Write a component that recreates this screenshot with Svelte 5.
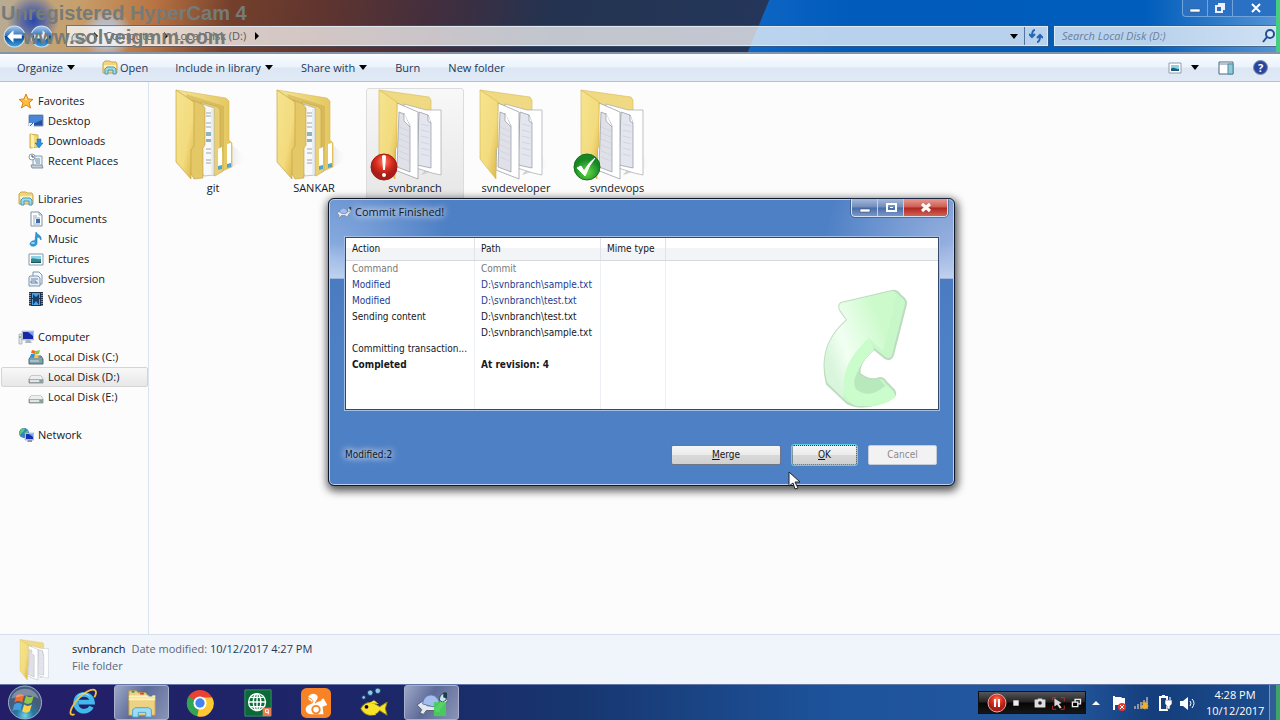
<script lang="ts">
	type Folder = { name: string; kind: 'files' | 'pages'; status?: 'modified' | 'normal' };

	const toolbar = [
		{ label: 'Organize', menu: true },
		{ label: 'Open', menu: false, icon: true },
		{ label: 'Include in library', menu: true },
		{ label: 'Share with', menu: true },
		{ label: 'Burn', menu: false },
		{ label: 'New folder', menu: false }
	];

	const groups = [
		{
			title: 'Favorites',
			icon: 'star',
			items: [
				{ label: 'Desktop', icon: 'desktop' },
				{ label: 'Downloads', icon: 'downloads' },
				{ label: 'Recent Places', icon: 'recent' }
			]
		},
		{
			title: 'Libraries',
			icon: 'library',
			items: [
				{ label: 'Documents', icon: 'document' },
				{ label: 'Music', icon: 'music' },
				{ label: 'Pictures', icon: 'picture' },
				{ label: 'Subversion', icon: 'subversion' },
				{ label: 'Videos', icon: 'video' }
			]
		},
		{
			title: 'Computer',
			icon: 'computer',
			items: [
				{ label: 'Local Disk (C:)', icon: 'system' },
				{ label: 'Local Disk (D:)', icon: 'disk' },
				{ label: 'Local Disk (E:)', icon: 'disk' }
			]
		},
		{ title: 'Network', icon: 'network', items: [] }
	];

	const folders: Folder[] = [
		{ name: 'git', kind: 'files' },
		{ name: 'SANKAR', kind: 'files' },
		{ name: 'svnbranch', kind: 'pages', status: 'modified' },
		{ name: 'svndeveloper', kind: 'pages' },
		{ name: 'svndevops', kind: 'pages', status: 'normal' }
	];

	const log = [
		{ action: 'Command', path: 'Commit', style: 'muted' },
		{ action: 'Modified', path: 'D:\\svnbranch\\sample.txt', style: 'changed' },
		{ action: 'Modified', path: 'D:\\svnbranch\\test.txt', style: 'changed' },
		{ action: 'Sending content', path: 'D:\\svnbranch\\test.txt', style: '' },
		{ action: '', path: 'D:\\svnbranch\\sample.txt', style: '' },
		{ action: 'Committing transaction...', path: '', style: '' },
		{ action: 'Completed', path: 'At revision: 4', style: 'done' }
	];

	const apps = ['ie', 'explorer', 'chrome', 'globe', 'uc', 'fish', 'turtle'];

	let selectedPlace = $state('Local Disk (D:)');
	let selectedFolder = $state('svnbranch');
	let dialogOpen = $state(true);
</script>

{#snippet navIcon(name: string)}
	<svg class="icon" viewBox="0 0 16 16" aria-hidden="true">
		{#if name === 'star'}
			<path d="M8 1l2 5 5 .4-4 3.4 1.6 5.2L8 12l-4.600 3L5 9.800 1 6.400 6 6z" fill="#ffbe3c" stroke="#d98220" />
			<path d="M8 3l1 4-5 0 3 0z" fill="#fff0a8" />
		{:else if name === 'desktop'}
			<path d="M1 2h14v11H1z" fill="#23509f" stroke="#8199b8" />
			<path d="M2 3h12v4L2 12z" fill="#4a86d8" />
			<path d="M1 10h5v4H1z" fill="#e8f3ff" /><path d="M2 13l3-3" stroke="#2467c0" />
		{:else if name === 'downloads'}
			<path d="M2 1l8 1v12l-8 1z" fill="#f2d978" stroke="#cfae4e" />
			<path d="M3 1l3 2v12l-3-1z" fill="#fdf0aa" />
			<path d="M9 6h4v4h2l-4 5-4-5h2z" fill="#2d8fdd" stroke="#1a67b0" stroke-width=".5" />
		{:else if name === 'recent'}
			<path d="M5 3h9v10H5z" fill="#edf3f8" stroke="#8c9dab" />
			<path d="M3 12h11l1 3H4z" fill="#c3ced6" stroke="#8796a3" />
			<path d="M7 6h5M7 8h5M8 10h4" stroke="#5e8fb5" />
			<circle cx="4" cy="4" r="3" fill="#fff" stroke="#8899a8" /><path d="M4 2v2h2" stroke="#446" fill="none" />
		{:else if name === 'library'}
			<path d="M1 3l2-2h5l1 1h5l1 2v9H1z" fill="#f3d67a" stroke="#c9a646" />
			<path d="M2 5h12v3H2z" fill="#fff1b5" />
			<path d="M3 14V9l2-2h7l2 2v5h-3v-4H6v4z" fill="#9adcf2" stroke="#4795bd" />
		{:else if name === 'document'}
			<path d="M3 1h8l3 3v11H3z" fill="#fff" stroke="#7d91a8" />
			<path d="M11 1v3h3M5 5h4M5 7h7M5 9h2M5 11h2M5 13h7" stroke="#93a7bd" fill="none" />
			<path d="M8 8h4v4H8z" fill="#3d6fae" />
		{:else if name === 'music'}
			<path d="M8 1c1 3 6 3 5 8-1-2-2-3-4-3v6c0 4-7 4-7 1 0-2 3-4 5-3z" fill="#2f9bdc" stroke="#1774b5" stroke-width=".6" />
			<ellipse cx="5" cy="12" rx="2" ry="1" fill="#91d8fa" />
		{:else if name === 'picture'}
			<path d="M1 3h14v11H1z" fill="#fff" stroke="#8497a5" />
			<path d="M3 5h10v7H3z" fill="#8cd4ec" />
			<path d="M3 8c3-2 5 1 10 0v4H3z" fill="#2d8a86" /><path d="M3 11h10v1H3z" fill="#1a5268" />
		{:else if name === 'subversion'}
			<path d="M5 1h6l3 3v9H5z" fill="#f6f9fc" stroke="#7f95b0" />
			<path d="M2 5h8l2 2v8H1V6z" fill="#e6eef8" stroke="#7f95b0" />
			<path d="M3 8h7M3 12h7M8 12v-2H3v2" stroke="#6883a6" fill="none" />
		{:else if name === 'video'}
			<path d="M1 1h14v14H1z" fill="#243348" />
			<path d="M4 2h8v5H4zM4 8h8v6H4z" fill="#4ca3df" />
			<path d="M5 3l3 3 3-3v11l-3-4-3 4z" fill="#173e6d" />
			<path d="M2 2v13M14 2v13" stroke="#e5edf4" stroke-dasharray="1 1" />
		{:else if name === 'computer'}
			<path d="M1 5h3v10H1z" fill="#dfe4e8" stroke="#909aa4" stroke-width=".6" /><path d="M1 8h2" stroke="#4a9d46" />
			<path d="M4 2h12v9H4z" fill="#c6ced8" stroke="#909bab" stroke-width=".5" />
			<path d="M5 3h10v7H5z" fill="#1727a8" /><path d="M10 3h5v4z" fill="#7aa0f1" />
			<path d="M8 11h4l2 3H7z" fill="#adb6c0" />
		{:else if name === 'system'}
			<path d="M1 10l2-3h10l2 3v5H1z" fill="#809eac" stroke="#4d6b79" />
			<path d="M2 12h9" stroke="#d0e2ea" /><path d="M12 12h2" stroke="#45d448" />
			<path d="M4 1l4 1-1 3-4-1z" fill="#f26822" /><path d="M8 2l4-1-1 4-4 0z" fill="#8bc63e" />
			<path d="M3 5l4 0-1 4-4-1z" fill="#2496db" /><path d="M7 5l4 1-1 3-4 0z" fill="#fcc536" />
		{:else if name === 'disk'}
			<path d="M1 10l2-3h10l2 3v4H1z" fill="#a9afb3" stroke="#777e83" stroke-width=".7" />
			<path d="M3 7h10l2 3H1z" fill="#eceff0" /><path d="M2 11h9v2H2z" fill="#e1e5e7" /><path d="M12 12h2" stroke="#3bb34a" />
		{:else if name === 'network'}
			<circle cx="6" cy="6" r="5" fill="#2c86c7" />
			<path d="M3 2c4-2 5 1 2 3-2 1-2 4-4 2zM6 6l4-3v5z" fill="#6ac36b" />
			<path d="M7 6h9v7H7z" fill="#c9d4df" stroke="#7d8898" stroke-width=".5" />
			<path d="M8 7h7v5H8z" fill="#1430b5" /><path d="M11 7h4v3z" fill="#7ba4f1" /><path d="M10 13h4v2h-5z" fill="#8d99a8" />
		{/if}
	</svg>
{/snippet}

{#snippet folderArt(kind: string, status?: string)}
	<svg class="folder-art" viewBox="0 0 98 92" aria-hidden="true">
		{#if kind === 'files'}
			<path d="M56 84l28-14-16-14z" fill="url(#shade)" />
			<path d="M12 1l50 8 3 3v39l3 3v24l-11 4-17-6z" fill="url(#fold)" stroke="#d8b955" stroke-width=".6" />
			<path d="M22 5l38 12v40l-3 25-8 2z" fill="#c9a74b" opacity=".5" />
			<path d="M37 13l17 5 2 3v38l3 3v20l-8 5-12-7z" fill="#e9d074" stroke="#c5a548" stroke-width=".6" />
			<path d="M32 13l18 6v67l-10 1-8-14z" fill="#f8f9fb" stroke="#a8adb4" stroke-width=".7" />
			<path d="M48 20v65" stroke="#cbd0d7" stroke-width=".6" />
			<path d="M42 24h5M42 27h5M42 34h5M42 38h5M42 60h5M42 64h5M42 71h5M42 74h5" stroke="#9ca6b0" />
			<path d="M42 43h5v4h-5zM42 50h5v3h-5z" fill="#8bb5c6" />
			<path d="M54 60l4-2v21l-4 2zM63 55l4-1v23l-4 2z" fill="#fff" />
			<path d="M54 77l4-1v4l-4 1zM63 75l4-1v4l-4 1z" fill="#57a2c7" />
			<path d="M28 11l10 4 3 4v37l-2 3v30l-9 1-5-9z" fill="#e4c868" stroke="#c09f44" stroke-width=".6" />
			<path d="M12 1l18 12v44l-3 4v29L12 73z" fill="url(#cover)" stroke="#c5a443" stroke-width=".7" />
		{:else}
			<path d="M55 86l30-9-12-12z" fill="url(#shade)" />
			<path d="M13 1l50 7 2 3v25H24z" fill="#efd982" stroke="#d4b959" stroke-width=".6" />
			<path d="M38 15l22 6h15v65l-9-2-28-9z" fill="#fff" stroke="#a6a8ad" stroke-width=".7" />
			<path d="M53 23l9 3 3 8v45l-14-3z" fill="#e3e5ef" stroke="#91959f" stroke-width=".7" />
			<path d="M62 26v6l3 2" fill="#fff" stroke="#8d929c" stroke-width=".7" />
			<path d="M31 14l21 9v67l-23-9z" fill="#fff" stroke="#9d9fa5" stroke-width=".8" />
			<path d="M33 23l5 2 6 12v46l-13-5z" fill="#e0e1e8" stroke="#92959d" stroke-width=".7" />
			<path d="M38 24l0 8 6 6" fill="#fff" stroke="#969aa4" stroke-width=".7" />
			<path d="M33 38l10 4M33 44l10 4M33 50l10 4M33 56l10 4M33 62l10 4M33 68l10 4M55 35l8 2M55 41l8 2M55 47l8 2M55 53l8 2M55 59l8 2M55 65l8 2" stroke="#d2d5e0" />
			<path d="M13 1l18 12v45l-2 2v30L13 70z" fill="url(#cover)" stroke="#d4b34a" stroke-width=".6" />
		{/if}
		{#if status === 'modified'}
			<circle cx="18" cy="78" r="13" fill="url(#red)" stroke="#9f1c13" />
			<path d="M16 67q2-2 4 0l-1 14h-2z" fill="#fff" /><circle cx="18" cy="86" r="2" fill="#fff" />
		{:else if status === 'normal'}
			<circle cx="19" cy="78" r="13" fill="url(#green)" stroke="#176f18" />
			<path d="M9 79l4-2 3 5q5-9 11-13-6 7-10 18z" fill="#fff" stroke="#fff" />
		{/if}
	</svg>
{/snippet}

{#snippet turtle()}
	<path d="M2 18l6-4 5 5h10l6-8h4l2 2-7 9-2 4-4 1-1-3h-9l-3 4-4-1 2-4z" fill="#e4e8ef" stroke="#555f70" />
	<path d="M8 17c1-12 15-13 18-1l-7 4z" fill="#a4bdf0" stroke="#6376a8" />
	<path d="M26 13c0-5 2-7 7-8v8l-4 2z" fill="#c9e5eb" stroke="#354657" /><path d="M30 5h4v6l-4-1z" fill="#173c54" />
{/snippet}

<svg class="defs" aria-hidden="true">
	<defs>
		<linearGradient id="cover" x2="1" y2="1"><stop stop-color="#f5e48f" /><stop offset=".6" stop-color="#f3db7e" /><stop offset="1" stop-color="#d9b443" /></linearGradient>
		<linearGradient id="fold" x2="1"><stop stop-color="#f5e596" /><stop offset="1" stop-color="#e3c65f" /></linearGradient>
		<linearGradient id="shade"><stop stop-color="#c5c5c5" /><stop offset="1" stop-color="#fff" stop-opacity="0" /></linearGradient>
		<radialGradient id="red" cy=".3"><stop stop-color="#fa7d63" /><stop offset=".6" stop-color="#dc2d20" /><stop offset="1" stop-color="#a81e16" /></radialGradient>
		<radialGradient id="green" cy=".7"><stop stop-color="#62dc46" /><stop offset="1" stop-color="#178726" /></radialGradient>
		<linearGradient id="mint" x1=".1" y1=".7" x2=".8" y2=".3"><stop stop-color="#d9f6dc" /><stop offset=".3" stop-color="#f2fff3" /><stop offset="1" stop-color="#ccfacb" /></linearGradient>
		<radialGradient id="orb" cy=".9"><stop stop-color="#6cd7ec" /><stop offset=".5" stop-color="#277a9f" /><stop offset="1" stop-color="#475c7c" /></radialGradient>
		<linearGradient id="round" y2="1" x2="0"><stop stop-color="#9fc7ef" /><stop offset=".48" stop-color="#3771b5" /><stop offset=".5" stop-color="#0b4291" /><stop offset="1" stop-color="#39a8e8" /></linearGradient>
	</defs>
</svg>

<div class="screen">
	<header class="titlebar">
		<div class="caption">
			<button aria-label="Minimize"><svg viewBox="0 0 14 12"><path d="M2 7h10v3H2z" fill="#fff" stroke="#456" stroke-width=".6" /></svg></button>
			<button aria-label="Restore"><svg viewBox="0 0 14 12"><path d="M5 2h6v6M3 4h6v6H3z" fill="none" stroke="#eef" stroke-width="2" /></svg></button>
			<button class="wide" aria-label="Close"><svg viewBox="0 0 14 12"><path d="M3 2l8 8M11 2l-8 8" stroke="#fff" stroke-width="2" /></svg></button>
		</div>
		<div class="address-row">
			<div class="history">
				<button aria-label="Back"><svg viewBox="0 0 24 24"><circle cx="12" cy="12" r="10" fill="url(#round)" stroke="#cbe0f1" /><path d="M11 6l-6 6 6 6v-4h8v-4h-8z" fill="#fff" /></svg></button>
				<button aria-label="Forward"><svg viewBox="0 0 24 24"><circle cx="12" cy="12" r="10" fill="url(#round)" stroke="#cbe0f1" /><path d="M13 6l6 6-6 6v-4H5v-4h8z" fill="#e4f0fb" /></svg></button>
			</div>
			<nav class="address" aria-label="Address">
				<svg class="drive" viewBox="0 0 16 16"><path d="M1 9l2-3h10l2 3v4H1z" fill="#d6d9db" stroke="#70777c" /></svg>
				<svg class="tri" viewBox="0 0 6 8"><path d="M1 0l4 4-4 4z" /></svg>
				<a href="#computer">Computer</a>
				<svg class="tri" viewBox="0 0 6 8"><path d="M1 0l4 4-4 4z" /></svg>
				<a href="#d">Local Disk (D:)</a>
				<svg class="tri last" viewBox="0 0 6 8"><path d="M1 0l4 4-4 4z" /></svg>
				<button class="drop" aria-label="Previous locations"><svg class="down" viewBox="0 0 8 5"><path d="M0 0h8L4 5z" /></svg></button>
				<button class="refresh" aria-label="Refresh"><svg viewBox="0 0 14 14"><path d="M6 1C3 1 3 4 3 7M0 5l3 3 3-3M8 13c3 0 3-3 3-6M8 9l3-3 3 3" fill="none" stroke="#2467b5" stroke-width="2" /></svg></button>
			</nav>
			<label class="search">
				<input type="text" aria-label="Search" placeholder="Search Local Disk (D:)" />
				<svg viewBox="0 0 14 14"><circle cx="8" cy="5" r="4" fill="#dcecfb" stroke="#234e92" stroke-width="2" /><path d="M5 8l-4 5" stroke="#234e92" stroke-width="2" /></svg>
			</label>
		</div>
	</header>

	<div class="toolbar">
		{#each toolbar as item}
			<button class:open={item.icon}>
				{#if item.icon}{@render navIcon('library')}{/if}
				{item.label}
				{#if item.menu}<svg class="down" viewBox="0 0 8 5"><path d="M0 0h8L4 5z" /></svg>{/if}
			</button>
		{/each}
		<div class="views">
			<button aria-label="Change view">
				<svg class="view-icon" viewBox="0 0 14 12"><path d="M1 1h12v10H1z" fill="#fff" stroke="#8c9eae" /><path d="M3 3h8v6H3z" fill="#8bd3e7" /><path d="M3 7c3-3 5 1 8 0v2H3z" fill="#205b7a" /></svg>
				<svg class="down" viewBox="0 0 8 5"><path d="M0 0h8L4 5z" /></svg>
			</button>
			<button aria-label="Preview pane"><svg class="pane-icon" viewBox="0 0 16 14"><path d="M1 1h14v12H1z" fill="#fff" stroke="#4d697f" /><path d="M1 3h14" stroke="#718a9e" /><path d="M10 3h5v10h-5z" fill="#8ccbd8" stroke="#53889d" /></svg></button>
			<button class="help" aria-label="Help"><span>?</span></button>
		</div>
	</div>

	<main>
		<aside>
			{#each groups as group}
				<section>
					<button class="place head">{@render navIcon(group.icon)}{group.title}</button>
					{#each group.items as item}
						<button class="place" class:selected={selectedPlace === item.label} onclick={() => (selectedPlace = item.label)}>
							{@render navIcon(item.icon)}{item.label}
						</button>
					{/each}
				</section>
			{/each}
		</aside>
		<div class="files">
			{#each folders as folder}
				<button class="folder" class:selected={selectedFolder === folder.name} onclick={() => (selectedFolder = folder.name)}>
					{@render folderArt(folder.kind, folder.status)}
					<span>{folder.name}</span>
				</button>
			{/each}
		</div>
	</main>

	<footer class="details">
		<div class="thumb">{@render folderArt('pages')}</div>
		<div class="info">
			<p><strong>{selectedFolder}</strong> <span>Date modified:</span> <time>10/12/2017 4:27 PM</time></p>
			<p>File folder</p>
		</div>
	</footer>

	<div class="taskbar">
		<button class="start" aria-label="Start">
			<svg viewBox="0 0 36 36">
				<circle cx="18" cy="18" r="17" fill="url(#orb)" stroke="#9cb7d0" />
				<path d="M9 11q4-3 8 0l-2 7q-4-3-8 0z" fill="#ee6c2d" /><path d="M19 11q4 3 8 0l-2 7q-4 3-8 0z" fill="#91c548" />
				<path d="M7 20q4-3 8 0l-2 7q-4-3-8 0z" fill="#419fe1" /><path d="M17 20q4 3 8 0l-2 7q-4 3-8 0z" fill="#ffd047" />
				<path d="M4 14C7 1 28 0 32 14 23 8 14 12 4 14z" fill="#fff" opacity=".3" />
			</svg>
		</button>
		{#each apps as app}
			<button class="app" class:active={app === 'explorer' || app === 'turtle'} aria-label={app}>
				<svg viewBox="0 0 36 32">
					{#if app === 'ie'}
						<path d="M26 20a9 9 0 1 1 1-5H12" fill="none" stroke="#41b8ee" stroke-width="5" />
						<path d="M8 28C-2 32 6 13 21 4c9-5 12-1 8 6" fill="none" stroke="#f2c13c" stroke-width="2" />
						<path d="M11 9c3-4 10-4 13 0" fill="none" stroke="#b6edff" />
					{:else if app === 'explorer'}
						<path d="M4 8V3h8l2 2h8l2 3h8v21H4z" fill="#eed284" stroke="#bd9c44" />
						<path d="M4 9h28M4 12h28" stroke="#fff2b8" stroke-width="2" />
						<path d="M7 4h3" stroke="#27a15b" stroke-width="2" /><path d="M16 6h4" stroke="#d54732" stroke-width="2" /><path d="M25 8h4" stroke="#3a7fbb" stroke-width="2" />
						<path d="M8 31v-8l3-2h14l3 2v8h-6v-5h-8v5z" fill="#9bdcf6" stroke="#4ca2cf" />
					{:else if app === 'chrome'}
						<circle cx="18" cy="16" r="14" fill="#e94335" />
						<path d="M18 16L6 9a14 14 0 0 0 9 21z" fill="#32a553" /><path d="M18 16l-3 14A14 14 0 0 0 31 10H18z" fill="#fcc934" />
						<circle cx="18" cy="16" r="7" fill="#fff" /><circle cx="18" cy="16" r="5" fill="#4384f3" />
					{:else if app === 'globe'}
						<path d="M4 2h28v28H4z" fill="#0b6b38" stroke="#408e62" />
						<g fill="none" stroke="#fff" stroke-width="1.500"><circle cx="17" cy="15" r="9" /><ellipse cx="17" cy="15" rx="4" ry="9" /><path d="M17 6v18M8 15h18M10 10h14M10 20h14" /></g>
						<path d="M23 21h9v9h-9z" fill="#ee7950" /><path d="M29 28v-5h-3v3h3" fill="none" stroke="#fff" />
					{:else if app === 'uc'}
						<rect x="2" y="0" width="32" height="32" rx="6" fill="#f78324" />
						<path d="M15 28c-9 1-10-8-5-10 4-1 5-4 1-5-4-3 2-9 7-6 5 4-2 7-1 10 1-3 7-2 7-5l2-1 4 7-5 2 1 8z" fill="#fff" />
						<circle cx="18" cy="23" r="4" fill="#fff" stroke="#f78324" stroke-width="2" /><path d="M9 10c6 2 7 4 4 7" fill="none" stroke="#f78324" />
					{:else if app === 'fish'}
						<path d="M4 22c3-6 9-9 17-4l3 2 8-5-2 7 2 7-8-5c-6 8-16 6-20-2z" fill="#f8e329" stroke="#8e851e" />
						<path d="M13 16l5-3 5 4M13 28l7 1-2-4" fill="#f8e329" /><circle cx="10" cy="20" r="2" fill="#102" />
						<g fill="#8bc9ec" stroke="#143b60"><circle cx="7" cy="10" r="2" /><circle cx="14" cy="5" r="3" /><circle cx="22" cy="3" r="3" /></g>
					{:else}
						{@render turtle()}<path d="M20 15h13v15H20z" fill="#44d057" opacity=".9" />
					{/if}
				</svg>
			</button>
		{/each}

		<div class="tray">
			<div class="recorder">
				<button aria-label="Pause"><svg viewBox="0 0 20 20"><circle cx="10" cy="10" r="9" fill="url(#red)" stroke="#f2a7a0" /><path d="M8 6v8M12 6v8" stroke="#fff" stroke-width="2" /></svg></button>
				<button aria-label="Stop"><svg viewBox="0 0 20 20"><path d="M7 7h6v6H7z" fill="#eee" /></svg></button>
				<i></i>
				<button aria-label="Capture"><svg viewBox="0 0 20 20"><path d="M4 6h3l1-1h4l1 1h3v9H4z" fill="#ddd" /><circle cx="10" cy="10" r="2" fill="#222" /></svg></button>
				<button aria-label="Region"><svg viewBox="0 0 20 20"><path d="M4 7V4h4M13 4h4v4M4 13v4h4M13 17h4v-4" fill="none" stroke="#c42e29" /><path d="M6 5l8 5-3 1 3 4-2 1-3-4-3 2z" fill="#d9d9d9" /></svg></button>
				<button aria-label="Restore recorder"><svg viewBox="0 0 20 20"><path d="M9 9V6h6v5h-3M6 9h6v5H6z" fill="none" stroke="#eee" stroke-width="1.500" /></svg></button>
			</div>
			<button aria-label="Show hidden icons"><svg viewBox="0 0 18 18"><path d="M5 11l4-4 4 4z" fill="#fff" /></svg></button>
			<button aria-label="Action center"><svg viewBox="0 0 18 18"><path d="M4 2v14" stroke="#fff" stroke-width="2" /><path d="M5 3h6l1 1h3v7H5z" fill="#fff" /><circle cx="12" cy="13" r="4" fill="#e3382e" /><path d="M10 11l4 4M14 11l-4 4" stroke="#fff" /></svg></button>
			<button aria-label="Network"><svg viewBox="0 0 18 18"><path d="M2 15v-3M5 15v-5M8 15V8M11 15V6M14 15V3" stroke="#8b96a5" stroke-width="2" /><path d="M12 7l1 2 2-1-1 3 2 1-2 1 1 2-2-1-1 2-1-2-3 1 1-2-2-1 3-1-1-3 2 1z" fill="#f5af25" /></svg></button>
			<button aria-label="Power"><svg viewBox="0 0 18 18"><path d="M4 3h7v13H4z" fill="none" stroke="#fff" stroke-width="2" /><path d="M9 6h7v4l-2 2v3h-3v-3l-2-2z" fill="#fff" stroke="#345" stroke-width=".6" /><path d="M11 3v3M14 3v3" stroke="#fff" /><path d="M6 1h3v2H6z" fill="#fff" /></svg></button>
			<button aria-label="Volume"><svg viewBox="0 0 18 18"><path d="M1 7h3l5-4v13l-5-4H1z" fill="#fff" /><path d="M11 7q2 2 0 5M13 5q4 4 0 9" fill="none" stroke="#fff" /></svg></button>
			<time class="clock">4:28 PM<br />10/12/2017</time>
			<button class="peek" aria-label="Show desktop"></button>
		</div>
	</div>

	{#if dialogOpen}
		<div class="dialog" role="dialog" aria-labelledby="dialog-title">
			<div class="dialog-head">
				<svg class="icon" viewBox="0 0 36 32">{@render turtle()}</svg>
				<h1 id="dialog-title">Commit Finished!</h1>
				<div class="dialog-buttons">
					<button aria-label="Minimize"><svg viewBox="0 0 14 12"><path d="M2 7h10v3H2z" fill="#fff" stroke="#456" stroke-width=".6" /></svg></button>
					<button aria-label="Maximize"><svg viewBox="0 0 14 12"><path d="M3 2h9v7H3z" fill="none" stroke="#fff" stroke-width="2" /><path d="M6 5h3v1H6z" fill="#fff" /></svg></button>
					<button class="close" aria-label="Close" onclick={() => (dialogOpen = false)}><svg viewBox="0 0 14 12"><path d="M3 2l8 7M11 2l-8 7" stroke="#fff" stroke-width="3" /></svg></button>
				</div>
			</div>
			<div class="list">
				<svg class="arrow" viewBox="0 0 86 120" aria-hidden="true">
					<path d="M18 14L69 2q5-1 8 4 7 5 6 9L70 66q-2 6-8 3L51 60Q34 75 37 85q10 8 20 4 4 0 6 4l8 8q3 5-2 8-27 14-45 5L4 95Q-6 57 24 31l-7-10q-2-5 1-7z" fill="#c8f8c9" stroke="#bcdcbf" stroke-width="2" />
					<path d="M18 14L69 2q5 0 4 7L60 62 46 49Q24 70 20 109L4 93Q-6 57 24 31l-7-10q-2-5 1-7z" fill="url(#mint)" />
					<path d="M46 49Q17 75 21 102q5 17 18 15 20 2 32-8 3-3-2-8l-6-4-9 4q-14 4-19-3-6-18 16-37z" fill="#cbfccc" />
					<path d="M35 82q-7 13-1 19 13 9 28-4l-6-7q-11 3-20-5z" fill="#b8e9bc" />
				</svg>
				<table>
					<thead>
						<tr><th class="action">Action</th><th class="path">Path</th><th class="mime">Mime type</th><th></th></tr>
					</thead>
					<tbody>
						{#each log as row}
							<tr class={row.style}><td>{row.action}</td><td>{row.path}</td><td></td><td></td></tr>
						{/each}
						<tr class="rest"><td></td><td></td><td></td><td></td></tr>
					</tbody>
				</table>
			</div>
			<div class="dialog-foot">
				<span class="summary">Modified:2</span>
				<button class="merge"><u>M</u>erge</button>
				<button class="ok" onclick={() => (dialogOpen = false)}><u>O</u>K</button>
				<button class="cancel" disabled>Cancel</button>
			</div>
		</div>
	{/if}

	<svg class="cursor" viewBox="0 0 14 20" aria-hidden="true"><path d="M1 1v14l4-3 2 6 3-1-3-6h5z" fill="#fff" stroke="#222" /></svg>
	<div class="watermark">Unregistered HyperCam 4<span>www.solveigmm.com</span></div>
</div>

<style>
	:global(body) {
		margin: 0;
	}
	.screen {
		position: relative;
		display: flex;
		flex-direction: column;
		min-height: 100vh;
		overflow: hidden;
		background: #fcfcfd;
		color: #16181d;
		font: 11px/16px 'Open Sans', 'Noto Sans', sans-serif;
	}
	button {
		padding: 0;
		border: 0;
		background: none;
		color: inherit;
		font: inherit;
	}
	svg {
		display: block;
		flex: none;
	}
	.defs {
		position: absolute;
		width: 0;
		height: 0;
	}
	.icon {
		width: 16px;
		height: 16px;
	}
	.down {
		width: 8px;
		height: 5px;
	}

	/* window frame */
	.titlebar {
		position: relative;
		height: 52px;
		border-bottom: 2px solid #8293aa;
		background:
			radial-gradient(circle at 33px 20px, #2547b0 0, #2547b099 12px, #2547b000 26px),
			radial-gradient(circle at 107px 34px, #b9cbe8 0, #b9cbe8aa 14px, #b9cbe800 26px),
			linear-gradient(100deg, #b8ab94 0, #c7a06b 6%, #b87443 12%, #74402c 18%, #60352f 25%, #422e3e 34%, #233350 43%, #24365a 60%);
	}
	.titlebar::before {
		position: absolute;
		inset: 0 0 0 58%;
		background: linear-gradient(90deg, #1067c5, #005bbb 20%, #005dbb 75%, #5594d5);
		clip-path: polygon(5% 0, 100% 0, 100% 100%, 1% 100%);
		content: '';
	}
	.titlebar::after {
		position: absolute;
		inset: 0 0 0 auto;
		width: 4px;
		background: #42cf82;
		content: '';
	}
	.caption {
		position: relative;
		display: flex;
		width: 98px;
		height: 17px;
		box-sizing: border-box;
		margin-left: auto;
		border: 1px solid #6fa4dc;
		border-width: 0 0 1px 1px;
		border-radius: 0 0 0 4px;
		background: #2a71c4;
	}
	.caption button {
		display: grid;
		place-items: center;
		flex: 1;
		border-right: 1px solid #6fa4dc;
	}
	.caption .wide {
		flex: 2;
		border: 0;
	}
	.caption svg,
	.dialog-buttons svg {
		width: 14px;
		height: 12px;
	}
	.address-row {
		position: relative;
		display: flex;
		align-items: center;
		margin-top: 7px;
		height: 24px;
	}
	.history {
		display: flex;
		gap: 2px;
		width: 65px;
		padding-left: 2px;
	}
	.history svg {
		width: 25px;
		height: 25px;
	}
	.address,
	.search {
		display: flex;
		align-items: center;
		height: 20px;
		box-sizing: border-box;
		border: 1px solid #e1e8f0;
		outline: 1px solid #42536b99;
		background: #ffffffb8;
	}
	.address {
		flex: 1;
		gap: 6px;
		padding-left: 3px;
	}
	.address a {
		color: #5b5960;
		text-decoration: none;
	}
	.drive {
		width: 16px;
		height: 16px;
	}
	.tri {
		width: 6px;
		height: 8px;
	}
	.tri.last {
		margin-left: 2px;
	}
	.drop {
		margin-left: auto;
		padding: 4px 0;
	}
	.refresh {
		align-self: stretch;
		padding: 0 4px;
		border-left: 1px solid #53759e;
	}
	.refresh svg,
	.search svg {
		width: 14px;
		height: 14px;
	}
	.search {
		width: 226px;
		margin-left: 6px;
		padding: 0 3px 0 7px;
	}
	.search input {
		flex: 1;
		min-width: 0;
		padding: 0;
		border: 0;
		outline: 0;
		background: none;
		font: italic 11px/16px 'Open Sans', sans-serif;
	}
	.search input::placeholder {
		color: #6b7f99;
	}

	.toolbar {
		display: flex;
		align-items: center;
		gap: 28px;
		height: 28px;
		box-sizing: border-box;
		padding: 0 12px 0 17px;
		border-bottom: 1px solid #b1c0d3;
		background: linear-gradient(#fbfdff, #eaf2fb 48%, #dce7f3 52%, #dfeaf6);
		color: #24385c;
	}
	.toolbar button {
		display: flex;
		align-items: center;
		gap: 4px;
	}
	.toolbar .open {
		gap: 2px;
		margin: 0 -1px;
	}
	.views {
		display: flex;
		align-items: center;
		gap: 19px;
		margin-left: auto;
	}
	.views button:first-child {
		gap: 9px;
	}
	.view-icon {
		width: 14px;
		height: 12px;
	}
	.pane-icon {
		width: 16px;
		height: 14px;
	}
	.toolbar .help {
		justify-content: center;
		width: 15px;
		height: 15px;
		border: 1px solid #8390ac;
		border-radius: 50%;
		background: #2846a0;
		color: #fff;
		font-weight: 700;
	}

	main {
		display: flex;
		flex: 1;
	}
	aside {
		width: 148px;
		padding-top: 9px;
		border-right: 1px solid #d8e4f0;
	}
	section {
		margin-bottom: 18px;
	}
	.place {
		display: flex;
		align-items: center;
		gap: 4px;
		width: 147px;
		height: 20px;
		box-sizing: border-box;
		margin-left: 1px;
		padding-left: 26px;
		border: 1px solid transparent;
		border-radius: 2px;
	}
	.place.head {
		padding-left: 16px;
	}
	.place.selected {
		border-color: #d5d5d5;
		background: linear-gradient(#f8f8f8, #e7e7e7);
	}
	.files {
		display: flex;
		flex: 1;
		flex-wrap: wrap;
		align-content: flex-start;
		gap: 3px;
		padding: 6px 15px;
	}
	.folder {
		display: flex;
		flex-direction: column;
		align-items: center;
		width: 98px;
		height: 116px;
		box-sizing: border-box;
		border: 1px solid transparent;
		border-radius: 3px;
		line-height: 14px;
	}
	.folder.selected {
		border-color: #dcdcdc;
		background: linear-gradient(#f8f8f8, #e6e6e6);
	}
	.folder-art {
		width: 98px;
		height: 92px;
	}

	.details {
		display: flex;
		align-items: center;
		height: 49px;
		border-top: 1px solid #d5dfeb;
		background: #f0f4fb;
		color: #5a6779;
	}
	.info {
		padding-bottom: 6px;
	}
	.details p {
		margin: 0;
		line-height: 17px;
	}
	.details strong {
		margin-right: 3px;
		color: #16181d;
		font-weight: 400;
	}
	.details time {
		color: #1e395b;
	}
	.thumb {
		width: 58px;
		padding-left: 14px;
	}
	.thumb .folder-art {
		width: 45px;
		height: 42px;
	}

	.taskbar {
		display: flex;
		height: 36px;
		box-sizing: border-box;
		border-top: 1px solid #6577a9;
		background: linear-gradient(90deg, #241e68, #1c2768 30%, #17366f 45%, #1d539b 65%, #2459a0 83%, #143e7c 90%, #1c4c8d 99%);
	}
	.start {
		width: 50px;
		margin-right: 6px;
	}
	.start svg {
		width: 36px;
		height: 35px;
		margin: auto;
	}
	.app {
		display: grid;
		place-items: center;
		width: 55px;
		margin-right: 3px;
		box-sizing: border-box;
		border: 1px solid transparent;
		border-radius: 3px;
	}
	.app.active {
		border-color: #a8b0cd;
		background: linear-gradient(120deg, #9da8c9, #5e6b98 45%, #8994b7);
	}
	.app svg {
		width: 34px;
		height: 30px;
	}
	.tray {
		display: flex;
		align-items: center;
		gap: 5px;
		margin-left: auto;
		color: #fff;
	}
	.tray svg {
		width: 18px;
		height: 18px;
	}
	.recorder {
		display: flex;
		align-items: center;
		width: 108px;
		height: 23px;
		box-sizing: border-box;
		margin-right: -4px;
		padding-left: 8px;
		border: 1px solid #101010;
		background: linear-gradient(#55565a, #222 48%, #050505 52%, #171717);
	}
	.recorder button:first-child svg {
		width: 20px;
		height: 20px;
	}
	.recorder i {
		width: 7px;
	}
	.clock {
		width: 58px;
		margin-left: 4px;
		text-align: center;
	}
	.peek {
		align-self: stretch;
		width: 11px;
		border-left: 1px solid #7596bd;
		border-right: 4px solid #3da56c;
		background: #315d95;
	}

	/* commit progress window */
	.dialog {
		position: absolute;
		top: 198px;
		left: 328px;
		display: flex;
		flex-direction: column;
		width: 627px;
		height: 288px;
		box-sizing: border-box;
		padding: 0 15px 0 16px;
		border: 1px solid #10182a;
		border-radius: 6px;
		background:
			linear-gradient(#fff0 45px, #e2eafaa0 79px, #416fb644 80px, #fff0 145px) left / 16px 100% no-repeat,
			linear-gradient(#fff0 45px, #e2eafaa0 79px, #416fb644 80px, #fff0 145px) right / 15px 100% no-repeat,
			radial-gradient(circle at 0 60px, #8fb0e2 0, #8fb0e200 120px) top / 100% 80px no-repeat,
			radial-gradient(circle at 100% 50px, #9ab2e0 0, #9ab2e000 130px) top / 100% 80px no-repeat,
			#4e80c5;
		box-shadow:
			inset 0 0 0 1px #bad2ef,
			1px 3px 9px 2px #000a;
		font: 10px/16px 'DejaVu Sans Condensed', 'DejaVu Sans', sans-serif;
	}
	.dialog-head {
		display: flex;
		gap: 3px;
		height: 38px;
		margin: 0 -9px;
	}
	.dialog-head .icon {
		margin-top: 5px;
	}
	h1 {
		margin: 5px 0 0;
		font: 11px/16px 'Open Sans', sans-serif;
		text-shadow:
			0 0 7px #fff,
			0 0 10px #fff;
	}
	.dialog-buttons {
		display: flex;
		width: 97px;
		height: 18px;
		box-sizing: border-box;
		margin-left: auto;
		border: 1px solid #d5e2f4;
		border-top: 0;
		border-radius: 0 0 4px 4px;
		outline: 1px solid #263c6177;
		overflow: hidden;
		background: linear-gradient(#a6b9d9, #6f8cbb 48%, #476ca7 52%, #7898ca);
	}
	.dialog-buttons button {
		display: grid;
		place-items: center;
		width: 26px;
		border-right: 1px solid #c2d0e6;
	}
	.dialog-buttons .close {
		flex: 1;
		border: 0;
		background: linear-gradient(#e59a90, #cf5b50 48%, #ae2520 52%, #d26353);
	}
	.list {
		position: relative;
		height: 173px;
		box-sizing: border-box;
		border: 1px solid #34496b;
		outline: 1px solid #a5bfe4;
		background: #fff;
	}
	.arrow {
		position: absolute;
		right: 29px;
		bottom: 0;
		width: 86px;
		height: 120px;
	}
	table {
		position: relative;
		width: 100%;
		height: 100%;
		border-collapse: collapse;
		table-layout: fixed;
		line-height: 16px;
	}
	th {
		height: 22px;
		padding: 0 5px 0 6px;
		border-right: 1px solid #dfe2e8;
		border-bottom: 1px solid #d5d8dd;
		background: linear-gradient(#fff 45%, #f3f4f6 46%);
		font-weight: 400;
		text-align: left;
	}
	td {
		height: 16px;
		padding: 0 0 0 6px;
		border-right: 1px solid #edf1f5;
		white-space: nowrap;
	}
	th:last-child,
	td:last-child {
		border-right: 0;
	}
	.action {
		width: 117px;
	}
	.path {
		width: 114px;
	}
	.mime {
		width: 53px;
		white-space: nowrap;
	}
	.muted {
		color: #777;
	}
	.changed {
		color: #1c3c91;
	}
	.done {
		font-weight: 700;
	}
	.rest td {
		height: auto;
	}
	.dialog-foot {
		display: flex;
		align-items: center;
		margin-top: 35px;
	}
	.summary {
		margin-right: auto;
		text-shadow:
			0 0 6px #fff,
			0 0 9px #fff;
	}
	.dialog-foot button {
		height: 20px;
		box-sizing: border-box;
		border: 1px solid #6d7787;
		border-radius: 2px;
		background: linear-gradient(#f6f6f6, #ebebeb 48%, #d9d9d9 52%, #d0d0d0);
	}
	.dialog-foot .merge {
		width: 110px;
		margin-right: 11px;
	}
	.dialog-foot .ok {
		width: 65px;
		margin-right: 11px;
		border: 1px dotted #174952;
		outline: 1px solid #5fd0e8;
	}
	.dialog-foot .cancel {
		width: 69px;
		margin-right: 2px;
		border-color: #c2ccda;
		background: #f2f2f3;
		color: #8a8c90;
	}

	.cursor {
		position: absolute;
		top: 471px;
		left: 788px;
		width: 14px;
		height: 20px;
	}
	.watermark {
		position: absolute;
		top: 1px;
		left: 1px;
		color: #757b78;
		font: 700 20px/24px 'Liberation Sans', Arial, sans-serif;
		pointer-events: none;
	}
	.watermark span {
		display: block;
		padding-left: 22px;
	}
</style>
